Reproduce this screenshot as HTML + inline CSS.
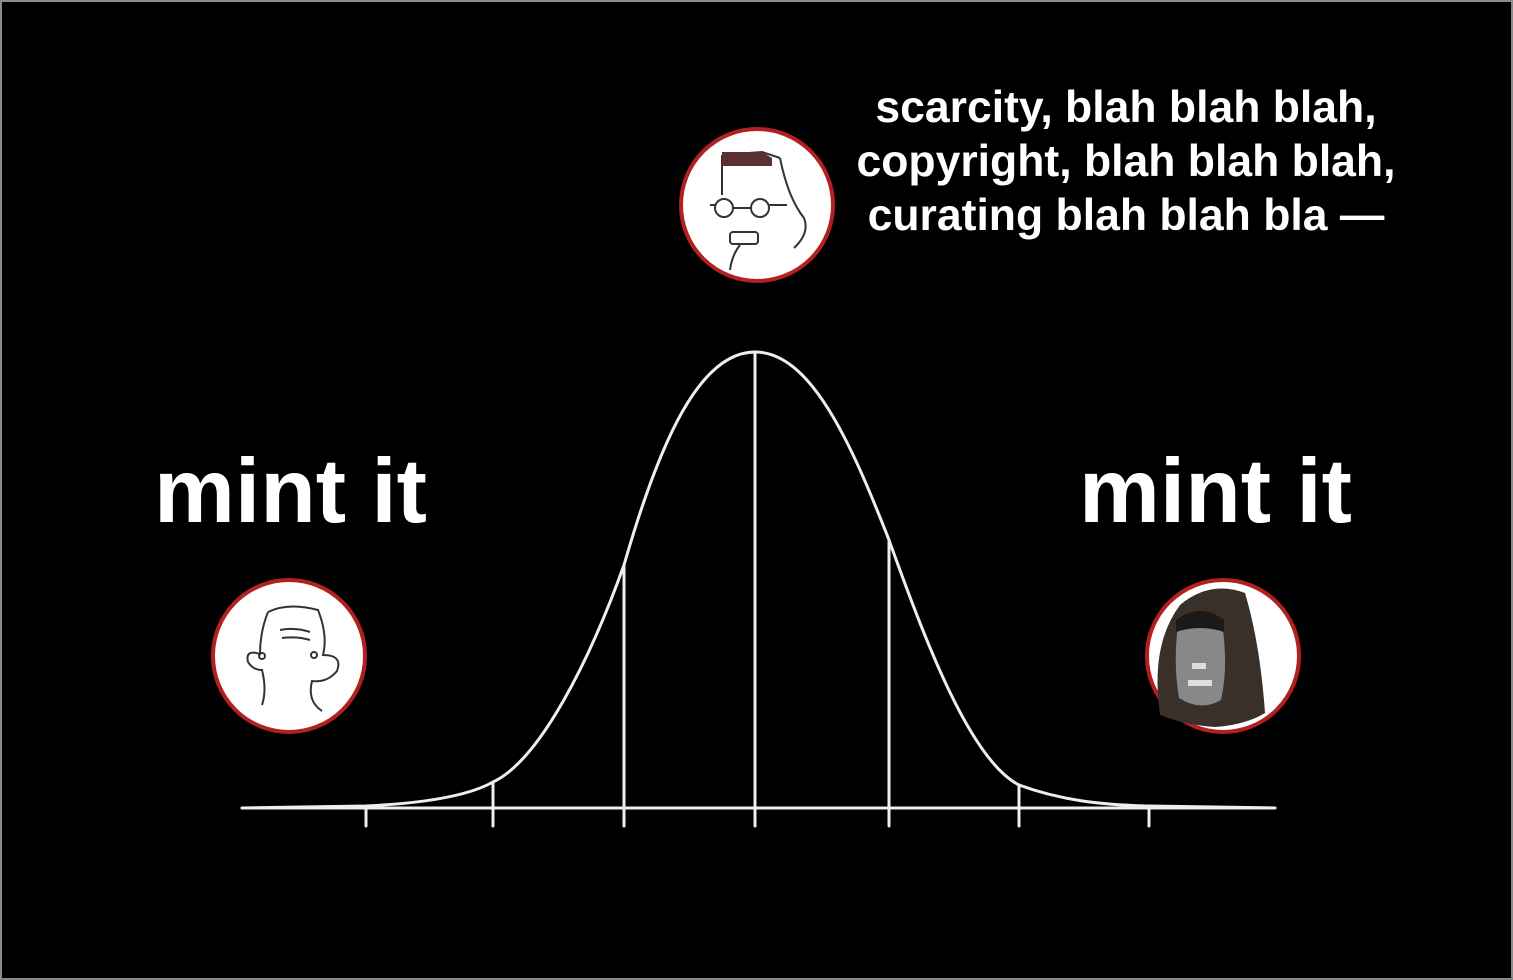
<!DOCTYPE html>
<html><head><meta charset="utf-8"><style>
html,body{margin:0;padding:0;background:#000;}
body{width:1513px;height:980px;position:relative;overflow:hidden;font-family:"Liberation Sans",Arial,sans-serif;}
.frame{position:absolute;left:0;top:0;width:1509px;height:976px;border:2px solid #8a8a8a;background:#000;}
.t{position:absolute;color:#fff;font-weight:bold;white-space:nowrap;}
.mint{font-size:91px;}
.top{left:776px;width:700px;top:81px;text-align:center;font-size:44.5px;line-height:54px;}
</style></head><body>
<div class="frame"></div>
<svg width="1513" height="980" style="position:absolute;left:0;top:0">
<g stroke="#eee" stroke-width="3" fill="none" stroke-linejoin="round" stroke-linecap="round">
<line x1="242" y1="808" x2="1275" y2="808"/>
<path d="M242 808 L366 806 C430 803 470 795 493 782 C540 760 590 660 624 565 C660 440 700 352 755 352 C810 352 850 440 889 540 C925 640 970 760 1019 785 C1060 800 1100 805 1149 806 L1275 808"/>
<line x1="366" y1="806" x2="366" y2="826"/>
<line x1="493" y1="782" x2="493" y2="826"/>
<line x1="624" y1="565" x2="624" y2="826"/>
<line x1="755" y1="352" x2="755" y2="826"/>
<line x1="889" y1="540" x2="889" y2="826"/>
<line x1="1019" y1="785" x2="1019" y2="826"/>
<line x1="1149" y1="806" x2="1149" y2="826"/>
</g>
<circle cx="757" cy="205" r="76" fill="#fff" stroke="#b32020" stroke-width="4"/>
<g stroke="#333" stroke-width="2" fill="none">
<path d="M722 155 l40 -3 l18 6 M722 155 v40 M780 158 q8 40 24 60 q6 15 -10 30 M740 245 q-8 10 -10 25"/>
<circle cx="724" cy="208" r="9"/><circle cx="760" cy="208" r="9"/>
<path d="M733 208 h18 M710 205 h5 M769 205 h18"/>
<rect x="730" y="232" width="28" height="12" rx="3"/>
</g>
<path d="M722 152 h40 l10 6 v8 h-50z" fill="#5a3030"/>
<circle cx="289" cy="656" r="76" fill="#fff" stroke="#b32020" stroke-width="4"/>
<g stroke="#333" stroke-width="2" fill="none">
<path d="M268 612 q20 -10 50 -2 q10 25 5 45 q20 0 14 16 q-10 12 -25 10 q-5 20 10 30 M268 612 q-8 20 -8 42 q-15 -5 -12 8 q5 8 14 8 q5 20 0 35"/>
<path d="M280 630 q15 -3 30 2 M282 638 q15 -2 28 2"/>
<circle cx="262" cy="656" r="3"/><circle cx="314" cy="655" r="3"/>
</g>
<circle cx="1223" cy="656" r="76" fill="#fff" stroke="#b32020" stroke-width="4"/>
<path d="M1160 715 q-10 -70 20 -110 q30 -25 65 -12 q15 50 20 120 q-20 12 -50 14 q-30 -2 -55 -12z" fill="#3a302a"/>
<path d="M1178 625 q25 -10 45 5 q5 40 -2 70 q-20 12 -42 -2 q-6 -35 -1 -73z" fill="#888"/>
<path d="M1176 620 q25 -18 48 0 v12 q-24 -8 -48 0z" fill="#1a1a1a"/>
<rect x="1192" y="663" width="14" height="6" fill="#ddd"/>
<rect x="1188" y="680" width="24" height="6" fill="#ddd"/>
</svg>
<div class="t mint" style="left:154px;top:440px;">mint it</div>
<div class="t mint" style="left:1079px;top:440px;">mint it</div>
<div class="t top">scarcity, blah blah blah,<br>copyright, blah blah blah,<br>curating blah blah bla —</div>
</body></html>
